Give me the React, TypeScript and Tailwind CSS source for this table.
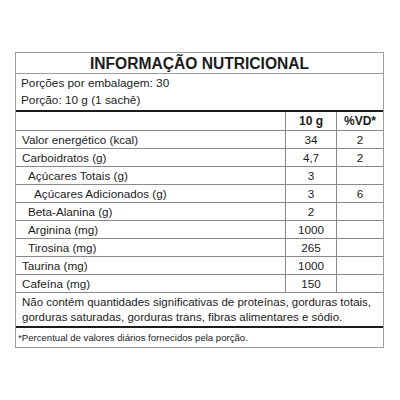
const rows = [
  { label: "Valor energético (kcal)", indent: 0, value: "34", vd: "2" },
  { label: "Carboidratos (g)", indent: 0, value: "4,7", vd: "2" },
  { label: "Açúcares Totais (g)", indent: 1, value: "3", vd: "" },
  { label: "Açúcares Adicionados (g)", indent: 2, value: "3", vd: "6" },
  { label: "Beta-Alanina (g)", indent: 1, value: "2", vd: "" },
  { label: "Arginina (mg)", indent: 1, value: "1000", vd: "" },
  { label: "Tirosina (mg)", indent: 1, value: "265", vd: "" },
  { label: "Taurina (mg)", indent: 0, value: "1000", vd: "" },
  { label: "Cafeína (mg)", indent: 0, value: "150", vd: "" },
]

const indentClass = ["pl-[6px]", "pl-[12px]", "pl-[18px]"]

export default function App() {
  return (
    <div className="min-h-[400px] w-[400px] bg-white pt-[52px] pl-[15px] font-['Liberation_Sans',Arial,sans-serif] text-[#1c1c1c]">
      <div className="w-[369px] border border-[#9c9c9c]">
        {/* Title */}
        <div className="flex h-[21px] items-center justify-center border-b border-[#9c9c9c] pt-[1px] text-[15.6px] font-bold leading-none">
          INFORMAÇÃO NUTRICIONAL
        </div>

        {/* Portions */}
        <div className="px-[5px] pt-[1px] pb-[1px] text-[11.8px] leading-[17px]">
          <div>Porções por embalagem: 30</div>
          <div>Porção: 10 g (1 sachê)</div>
        </div>

        <div className="h-[2px] bg-[#1c1c1c]" />

        {/* Header */}
        <div className="grid h-[19px] grid-cols-[269px_51px_1fr] border-b border-[#8a8a8a] text-[12px] font-bold leading-none">
          <div />
          <div className="flex items-center justify-center border-l border-[#8a8a8a]">10 g</div>
          <div className="flex items-center justify-center border-l border-[#8a8a8a]">%VD*</div>
        </div>

        {rows.map((r) => (
          <div
            key={r.label}
            className="grid h-[18px] grid-cols-[269px_51px_1fr] border-b border-[#8a8a8a] text-[11.7px] leading-none"
          >
            <div className={`flex items-center ${indentClass[r.indent]}`}>{r.label}</div>
            <div className="flex items-center justify-center border-l border-[#8a8a8a]">{r.value}</div>
            <div className="flex items-center justify-center border-l border-[#8a8a8a]">{r.vd}</div>
          </div>
        ))}

        {/* Footnote */}
        <div className="h-[33px] px-[6px] pt-[2px] text-[11.5px] leading-[15px]">
          Não contém quantidades significativas de proteínas, gorduras totais, gorduras saturadas, gorduras trans, fibras alimentares e sódio.
        </div>

        <div className="h-[2px] bg-[#1c1c1c]" />

        <div className="flex h-[19px] items-center px-[2px] text-[9.6px] leading-none">
          *Percentual de valores diários fornecidos pela porção.
        </div>
      </div>
    </div>
  )
}
